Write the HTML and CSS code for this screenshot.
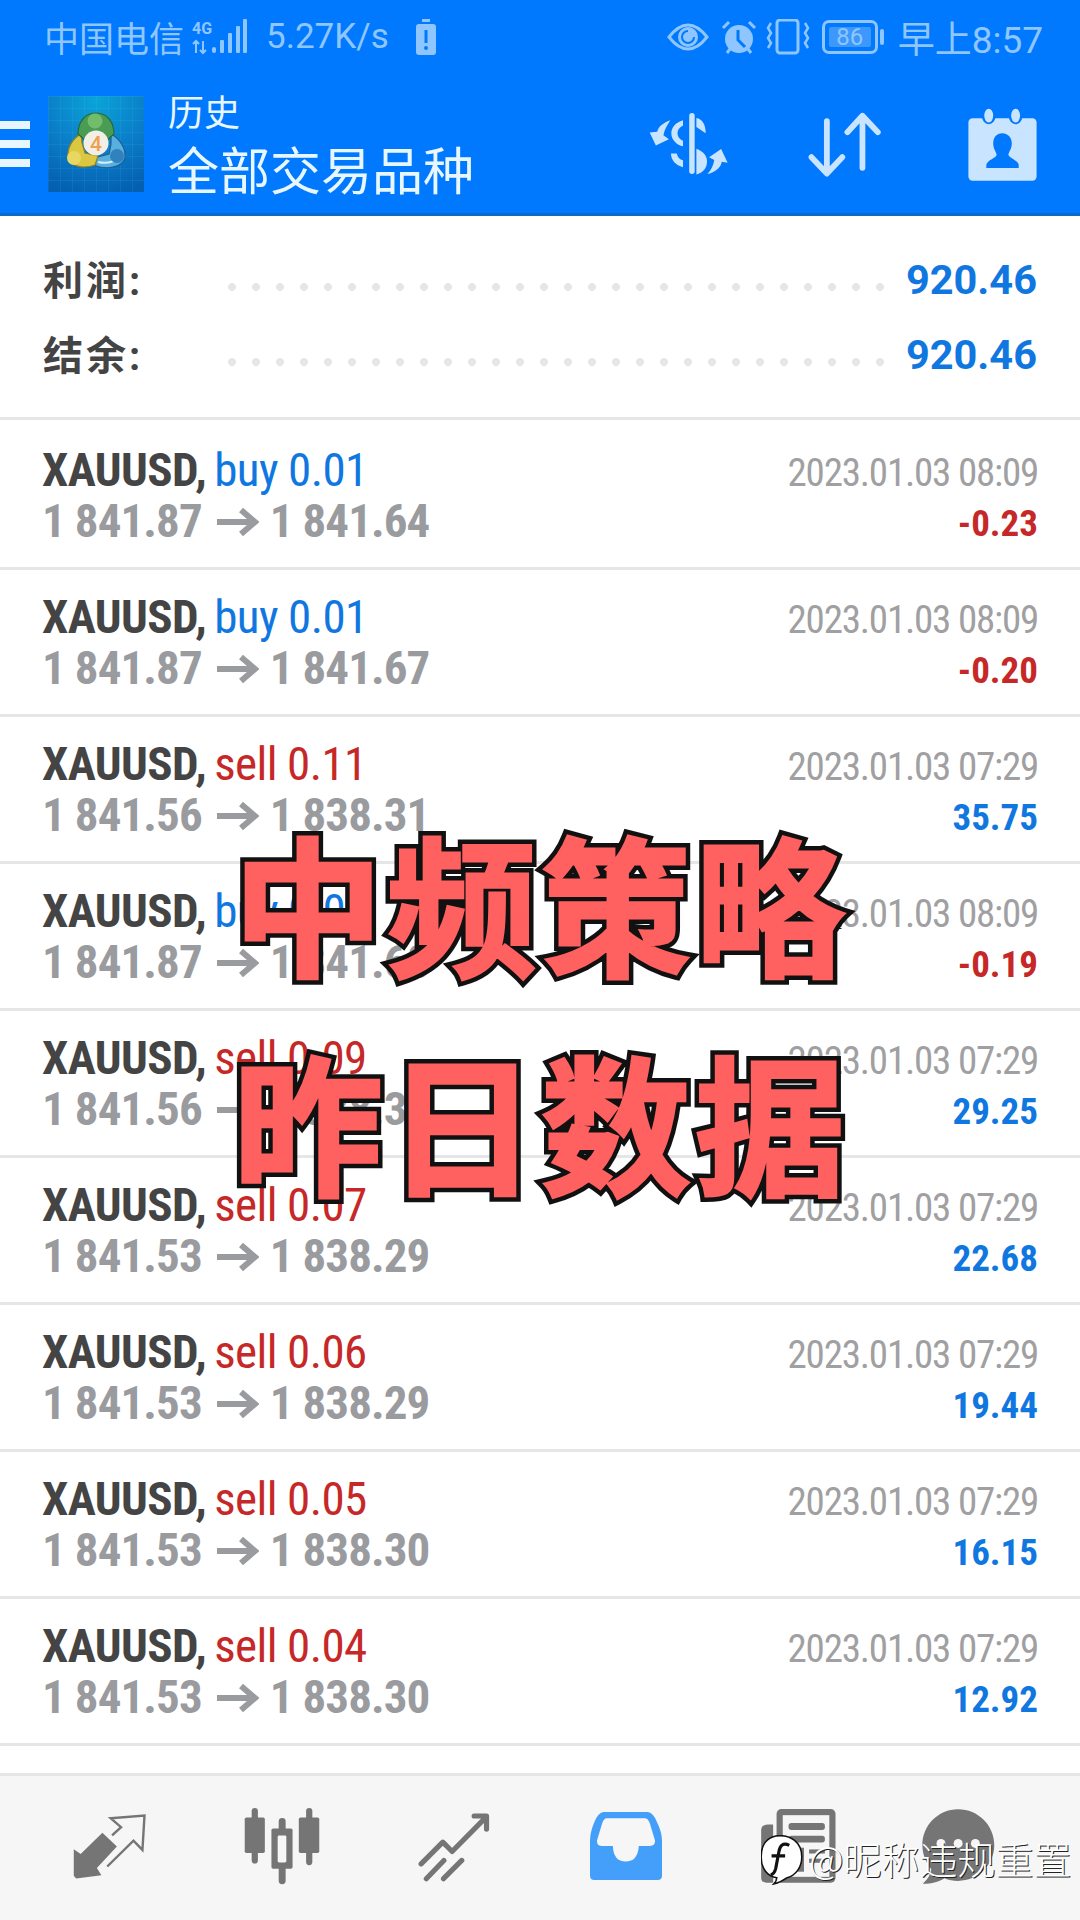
FILE: index.html
```html
<!DOCTYPE html>
<html lang="zh-CN">
<head>
    <meta charset="UTF-8">
    <title>历史</title>
    <link rel="stylesheet" href="styles.css">
</head>
<body>
    <header class="top">
        <div class="status">
            <span class="carrier">中国电信</span>
            <svg class="net" viewBox="0 0 56 36" width="56" height="36">
                <text x="0" y="15" class="net-4g">4G</text>
                <path d="M4 22v12M1 25l3-3 3 3M11 22v12M8 31l3 3 3-3" fill="none" stroke="#8fc6ff" stroke-width="2"/>
                <rect x="20" y="28" width="4" height="6" rx="2" fill="#8fc6ff"/>
                <rect x="28" y="21" width="4" height="13" rx="1" fill="#8fc6ff"/>
                <rect x="36" y="14" width="4" height="20" rx="1" fill="#8fc6ff"/>
                <rect x="44" y="7" width="4" height="27" rx="1" fill="#8fc6ff"/>
                <rect x="51" y="0" width="4" height="34" rx="1" fill="#8fc6ff"/>
            </svg>
            <span class="speed">5.27K/s</span>
            <svg class="bat-low" viewBox="0 0 20 36" width="20" height="36">
                <rect x="6" y="0" width="8" height="3" fill="#8fc6ff"/>
                <rect x="0" y="5" width="20" height="31" rx="3" fill="#8fc6ff"/>
                <rect x="8.5" y="11" width="3" height="13" fill="#0079fe"/>
                <circle cx="10" cy="29" r="2" fill="#0079fe"/>
            </svg>
            <span class="spacer"></span>
            <svg viewBox="0 0 42 28" width="42" height="28">
                <path d="M2 14C9 5 15 2 21 2s12 3 19 12c-7 9-13 12-19 12S9 23 2 14z" fill="none" stroke="#8fc6ff" stroke-width="3"/>
                <circle cx="21" cy="14" r="10" fill="#8fc6ff"/>
                <path d="M21 8a6 6 0 1 0 6 6" fill="none" stroke="#0079fe" stroke-width="2"/>
            </svg>
            <svg class="st-gap" viewBox="0 0 36 36" width="36" height="36">
                <circle cx="18" cy="20" r="14" fill="#8fc6ff"/>
                <path d="M17 11v10l7 7" fill="none" stroke="#0079fe" stroke-width="3"/>
                <path d="M2 9l6-6M34 9l-6-6M6 34l3-4M30 34l-3-4" stroke="#8fc6ff" stroke-width="3" fill="none"/>
            </svg>
            <svg class="st-vib" viewBox="0 0 44 36" width="44" height="36">
                <rect x="11" y="1" width="21" height="33" rx="3" fill="none" stroke="#8fc6ff" stroke-width="3"/>
                <path d="M5 4l-3 5 3 5-3 5 3 5-3 5M39 4l3 5-3 5 3 5-3 5 3 5" fill="none" stroke="#8fc6ff" stroke-width="2.5"/>
            </svg>
            <span class="battery"><span class="battery-num">86</span></span>
            <span class="battery-tip"></span>
            <span class="clock">早上8:57</span>
        </div>
        <div class="toolbar">
            <div class="burger"><i></i><i></i><i></i></div>
            <svg class="logo" viewBox="0 0 96 96" width="96" height="96">
                <defs>
                    <radialGradient id="bg" cx="0.5" cy="0.05" r="1">
                        <stop offset="0" stop-color="#0aa4d8"/>
                        <stop offset="0.55" stop-color="#0a7cc8"/>
                        <stop offset="1" stop-color="#045fb0"/>
                    </radialGradient>
                    <pattern id="grid" width="12" height="12" patternUnits="userSpaceOnUse">
                        <path d="M12 0H0V12" fill="none" stroke="#6cc4ee" stroke-width="0.6" opacity="0.35"/>
                    </pattern>
                </defs>
                <rect width="96" height="96" fill="url(#bg)"/>
                <rect width="96" height="96" fill="url(#grid)"/>
                <path d="M63 38c9 5 15 14 14 24-3 9-17 12-29 8l-2-8 15-4 2-10z" fill="#58b0de" stroke="#1f5f96" stroke-width="1.2"/>
                <path d="M33 38C24 43 19 52 20 62c3 9 16 11 27 7l3-9-13-3-3-10z" fill="#dcc840" stroke="#8f8226" stroke-width="1.2"/>
                <path d="M48 17c11 0 18 9 18 21l-9 8H39l-9-8c0-12 7-21 18-21z" fill="#4a9c54" stroke="#256a3c" stroke-width="1.2"/>
                <path d="M50 66c8 2 16 0 22-5" fill="none" stroke="#d4eefa" stroke-width="2"/>
                <circle cx="47" cy="25" r="7.5" fill="#72bc6c"/>
                <circle cx="26" cy="62" r="7" fill="#e8d862"/>
                <circle cx="69" cy="60" r="7" fill="#2f82bc"/>
                <circle cx="48" cy="47" r="12.5" fill="#f2efe6"/>
                <text x="48" y="55" text-anchor="middle" class="logo-4">4</text>
            </svg>
            <div class="titles">
                <div class="title-sm">历史</div>
                <div class="title-lg">全部交易品种</div>
            </div>
            <span class="spacer"></span>
            <svg class="tool-money" viewBox="320 335 230 185" width="79" height="64">
                <rect x="437" y="337" width="16" height="178" rx="8"/>
                <path d="M458 352c16 3 27 17 27 44l-27-18zM458 516c18-4 31-17 31-38 0-17-12-30-31-37z"/>
                <path d="M419 358c-22 6-34 22-34 38 0 20 16 34 34 38v-16c-10-4-16-12-16-22s6-16 16-22zM384 455c0 20 14 34 35 40v-20c-10-2-16-10-18-20z"/>
                <path d="M382 358c-22 8-36 20-38 34l-22 2 18 38 38-18-16-12c2-14 10-28 20-44zM490 515c26-6 40-22 42-36l17 3-19-40-35 24 15 8c-2 14-8 28-20 41z"/>
            </svg>
            <svg class="tool-arrows" viewBox="780 335 220 190" width="76" height="65">
                <path d="M837 362v150M792 467l45 48 45-48M941 498V348M897 394l44-48 45 48" fill="none" stroke-width="17" stroke-linecap="round" stroke-linejoin="round"/>
            </svg>
            <svg class="tool-cal" viewBox="1243 322 198 212" width="69" height="73">
                <rect x="1243" y="352" width="198" height="181" rx="12"/>
                <ellipse cx="1302" cy="345" rx="20" ry="24" fill="#0079fe"/>
                <ellipse cx="1380" cy="345" rx="20" ry="24" fill="#0079fe"/>
                <ellipse cx="1302" cy="344" rx="13" ry="20"/>
                <ellipse cx="1380" cy="344" rx="13" ry="20"/>
                <path d="M1341 395c-16 0-26 12-26 30 0 14 8 24 10 32 0 10-28 16-30 30v9h94v-9c-2-14-30-20-30-30 2-8 10-18 10-32 0-18-12-30-28-30z" fill="#0079fe"/>
            </svg>
        </div>
    </header>

    <section class="summary">
        <div class="sum-row">
            <span class="sum-label">利润:</span>
            <span class="dots"></span>
            <span class="sum-value">920.46</span>
        </div>
        <div class="sum-row">
            <span class="sum-label">结余:</span>
            <span class="dots"></span>
            <span class="sum-value">920.46</span>
        </div>
    </section>

    <main class="list">
        <div class="deal">
            <div class="deal-left">
                <div class="line-a"><b>XAUUSD,</b> <span class="blue">buy 0.01</span></div>
                <div class="line-b">1 841.87 <svg class="arrow" viewBox="0 0 42 30"><path d="M0 15h38M24 3l14 12-14 12"/></svg> 1 841.64</div>
            </div>
            <div class="deal-right">
                <div class="date">2023.01.03 08:09</div>
                <div class="profit red">-0.23</div>
            </div>
        </div>
        <div class="deal">
            <div class="deal-left">
                <div class="line-a"><b>XAUUSD,</b> <span class="blue">buy 0.01</span></div>
                <div class="line-b">1 841.87 <svg class="arrow" viewBox="0 0 42 30"><path d="M0 15h38M24 3l14 12-14 12"/></svg> 1 841.67</div>
            </div>
            <div class="deal-right">
                <div class="date">2023.01.03 08:09</div>
                <div class="profit red">-0.20</div>
            </div>
        </div>
        <div class="deal">
            <div class="deal-left">
                <div class="line-a"><b>XAUUSD,</b> <span class="red-thin">sell 0.11</span></div>
                <div class="line-b">1 841.56 <svg class="arrow" viewBox="0 0 42 30"><path d="M0 15h38M24 3l14 12-14 12"/></svg> 1 838.31</div>
            </div>
            <div class="deal-right">
                <div class="date">2023.01.03 07:29</div>
                <div class="profit blue">35.75</div>
            </div>
        </div>
        <div class="deal">
            <div class="deal-left">
                <div class="line-a"><b>XAUUSD,</b> <span class="blue">buy 0.01</span></div>
                <div class="line-b">1 841.87 <svg class="arrow" viewBox="0 0 42 30"><path d="M0 15h38M24 3l14 12-14 12"/></svg> 1 841.68</div>
            </div>
            <div class="deal-right">
                <div class="date">2023.01.03 08:09</div>
                <div class="profit red">-0.19</div>
            </div>
        </div>
        <div class="deal">
            <div class="deal-left">
                <div class="line-a"><b>XAUUSD,</b> <span class="red-thin">sell 0.09</span></div>
                <div class="line-b">1 841.56 <svg class="arrow" viewBox="0 0 42 30"><path d="M0 15h38M24 3l14 12-14 12"/></svg> 1 838.31</div>
            </div>
            <div class="deal-right">
                <div class="date">2023.01.03 07:29</div>
                <div class="profit blue">29.25</div>
            </div>
        </div>
        <div class="deal">
            <div class="deal-left">
                <div class="line-a"><b>XAUUSD,</b> <span class="red-thin">sell 0.07</span></div>
                <div class="line-b">1 841.53 <svg class="arrow" viewBox="0 0 42 30"><path d="M0 15h38M24 3l14 12-14 12"/></svg> 1 838.29</div>
            </div>
            <div class="deal-right">
                <div class="date">2023.01.03 07:29</div>
                <div class="profit blue">22.68</div>
            </div>
        </div>
        <div class="deal">
            <div class="deal-left">
                <div class="line-a"><b>XAUUSD,</b> <span class="red-thin">sell 0.06</span></div>
                <div class="line-b">1 841.53 <svg class="arrow" viewBox="0 0 42 30"><path d="M0 15h38M24 3l14 12-14 12"/></svg> 1 838.29</div>
            </div>
            <div class="deal-right">
                <div class="date">2023.01.03 07:29</div>
                <div class="profit blue">19.44</div>
            </div>
        </div>
        <div class="deal">
            <div class="deal-left">
                <div class="line-a"><b>XAUUSD,</b> <span class="red-thin">sell 0.05</span></div>
                <div class="line-b">1 841.53 <svg class="arrow" viewBox="0 0 42 30"><path d="M0 15h38M24 3l14 12-14 12"/></svg> 1 838.30</div>
            </div>
            <div class="deal-right">
                <div class="date">2023.01.03 07:29</div>
                <div class="profit blue">16.15</div>
            </div>
        </div>
        <div class="deal">
            <div class="deal-left">
                <div class="line-a"><b>XAUUSD,</b> <span class="red-thin">sell 0.04</span></div>
                <div class="line-b">1 841.53 <svg class="arrow" viewBox="0 0 42 30"><path d="M0 15h38M24 3l14 12-14 12"/></svg> 1 838.30</div>
            </div>
            <div class="deal-right">
                <div class="date">2023.01.03 07:29</div>
                <div class="profit blue">12.92</div>
            </div>
        </div>
    </main>

    <nav class="tabs">
        <svg viewBox="210 220 220 200" width="76" height="69">
            <path d="M215 328l20 14 63-62 42 40-58 62 13 21-73 10-7-8z" fill="#757575"/>
            <path d="M326 288l26-24-30-26 98-8-6 100-26-27-76 75" fill="none" stroke="#757575" stroke-width="7"/>
        </svg>
        <svg viewBox="705 205 225 225" width="78" height="78">
            <rect x="730" y="208" width="18" height="160" rx="9" fill="#757575"/>
            <rect x="710" y="235" width="58" height="103" rx="5" fill="#757575"/>
            <rect x="887" y="208" width="18" height="165" rx="9" fill="#757575"/>
            <rect x="866" y="235" width="59" height="103" rx="5" fill="#757575"/>
            <rect x="808" y="237" width="20" height="191" rx="10" fill="#757575"/>
            <rect x="787" y="267" width="61" height="116" rx="5" fill="#757575"/>
            <rect x="805" y="287" width="25" height="78" rx="4" fill="#f6f6f6"/>
        </svg>
        <svg viewBox="1210 210 215 205" width="74" height="71">
            <path d="M1222 363l63-63 27 27 98-99M1376 224h36v38M1237 406l51-53M1287 406l53-53" fill="none" stroke="#757575" stroke-width="15" stroke-linecap="round" stroke-linejoin="round"/>
        </svg>
        <svg viewBox="147 217 208 196" width="72" height="68">
            <path fill-rule="evenodd" fill="#449ffb" d="M185 217h130q15 3 25 28 15 30 15 55v100q0 13-13 13H160q-13 0-13-13V300q0-25 13-55 10-25 25-28zM195 235q-8 0-13 15l-15 50q0 15 13 15h33q2 45 37 45t38-45h32q15 0 15-15l-15-50q-5-15-15-15z"/>
        </svg>
        <svg viewBox="645 207 218 216" width="75" height="74">
            <path d="M680 252v170h-20q-15 0-15-15V270q0-18 20-18z" fill="#757575"/>
            <rect x="690" y="207" width="172" height="215" rx="14" fill="#757575"/>
            <rect x="708" y="225" width="136" height="180" fill="#f6f6f6"/>
            <rect x="725" y="248" width="106" height="20" rx="8" fill="#757575"/>
            <rect x="725" y="285" width="106" height="20" rx="8" fill="#757575"/>
            <rect x="725" y="320" width="45" height="70" fill="#757575"/>
            <rect x="785" y="325" width="46" height="12" fill="#757575"/>
            <rect x="785" y="352" width="46" height="12" fill="#757575"/>
        </svg>
        <svg class="tab-chat" viewBox="1108 205 212 218" width="73" height="75">
            <path d="M1213 206c58 0 105 47 105 104s-47 104-105 104c-14 0-28-3-40-8-14 10-36 16-63 16 12-10 22-24 25-42-16-18-26-44-26-70 0-57 46-104 104-104z" fill="#757575"/>
            <circle cx="1163" cy="305" r="13" fill="#f6f6f6"/>
            <circle cx="1213" cy="305" r="13" fill="#f6f6f6"/>
            <circle cx="1263" cy="305" r="13" fill="#f6f6f6"/>
        </svg>
    </nav>

    <div class="stamp">
        <div data-t="中频策略">中频策略</div>
        <div data-t="昨日数据">昨日数据</div>
    </div>

    <div class="mark">
        <svg class="mark-logo" viewBox="0 0 40 48" width="42" height="50">
            <path d="M14 1c14-2 25 6 25 20 0 10-6 18-14 20-4 3-8 5-13 6 2-2 3-4 3-6C6 40 0 32 0 21 0 10 5 3 14 1z" fill="#fff" stroke="#111" stroke-width="1.5"/>
            <path d="M27 10c-6-3-9 0-10 6l-3 16c-1 4-3 6-5 6M10 20h13" fill="none" stroke="#111" stroke-width="3"/>
        </svg>
        <span>@昵称违规重置</span>
    </div>
</body>
</html>
```

FILE: styles.css
```css
* {
    box-sizing: border-box;
}
body {
    margin: 0;
    width: 1080px;
    height: 1920px;
    overflow: hidden;
    position: relative;
    display: flex;
    flex-direction: column;
    background: #fff;
    font-family: Roboto, "Noto Sans CJK SC", sans-serif;
}
.spacer {
    flex: 1;
}

/* blue header */
.top {
    height: 216px;
    background: #0079fe;
    border-bottom: 3px solid #0a6cc8;
    flex-shrink: 0;
}
.status {
    height: 75px;
    padding: 0 37px 2px 44px;
    display: flex;
    align-items: center;
    color: #8fc6ff;
    font-size: 35px;
}
.net {
    margin-left: 8px;
}
.net-4g {
    font-size: 16px;
    font-weight: 700;
    fill: #8fc6ff;
}
.speed {
    margin-left: 18px;
}
.bat-low {
    margin-left: 27px;
}
.st-gap {
    margin-left: 12px;
}
.st-vib {
    margin-left: 9px;
}
.battery {
    width: 56px;
    height: 34px;
    margin-left: 12px;
    padding: 4px;
    border: 3px solid #8fc6ff;
    border-radius: 7px;
    display: flex;
}
.battery-num {
    flex: 1;
    background: #3d98fb;
    border-radius: 2px;
    font-size: 24px;
    line-height: 21px;
    text-align: center;
}
.battery-tip {
    width: 4px;
    height: 16px;
    margin-left: 2px;
    margin-right: 14px;
    background: #8fc6ff;
    border-radius: 2px;
}
.clock {
    font-size: 37px;
}
.toolbar {
    height: 138px;
    padding-right: 43px;
    display: flex;
    align-items: center;
}
.burger {
    width: 30px;
    display: flex;
    flex-direction: column;
    gap: 11px;
}
.burger i {
    height: 8px;
    background: #e8f6ff;
}
.logo {
    margin-left: 18px;
}
.logo-4 {
    font-size: 21px;
    font-weight: 500;
    fill: #eea050;
}
.titles {
    margin-left: 24px;
    padding-top: 6px;
    display: flex;
    flex-direction: column;
    gap: 6px;
    color: #e8f6ff;
}
.title-sm {
    font-size: 36px;
    line-height: 46px;
}
.title-lg {
    font-size: 51px;
    line-height: 60px;
}
.tool-money,
.tool-cal {
    fill: #c8e4ff;
}
.tool-arrows {
    stroke: #c8e4ff;
    margin: 0 85px 0 79px;
}

/* profit and balance */
.summary {
    height: 204px;
    padding: 26px 43px 0;
    border-bottom: 3px solid #e6e6e6;
    flex-shrink: 0;
}
.sum-row {
    height: 75px;
    display: flex;
    align-items: center;
}
.sum-label {
    width: 183px;
    margin-top: -3px;
    font-size: 40px;
    font-weight: 700;
    letter-spacing: 3px;
    color: #444;
}
.dots {
    flex: 1;
    height: 8px;
    margin: 14px 20px 0 2px;
    background: radial-gradient(circle at 4px 4px, #e6e6e6 3.6px, transparent 4.2px) 0 0 / 24px 8px repeat-x;
}
.sum-value {
    font-size: 41.5px;
    font-weight: 700;
    color: #1177e0;
}

/* history rows */
.list {
    flex: 1;
    overflow: hidden;
    min-height: 0;
}
.deal {
    height: 147px;
    padding: 0 42px;
    border-bottom: 3px solid #e6e6e6;
    display: flex;
    justify-content: space-between;
    font-stretch: condensed;
}
.deal:first-child {
    height: 150px;
    padding-top: 3px;
}
.deal-left {
    padding-top: 21px;
}
.line-a {
    font-size: 47px;
    line-height: 52px;
    letter-spacing: -0.6px;
    color: #444;
    white-space: nowrap;
}
.line-a b {
    margin-right: -2px;
}
.line-b {
    font-size: 47px;
    font-weight: 700;
    line-height: 50px;
    letter-spacing: -0.9px;
    color: #9a9b9f;
    white-space: nowrap;
}
.arrow {
    width: 42px;
    height: 30px;
    margin: 0 1px 0 5px;
    fill: none;
    stroke: #9a9b9f;
    stroke-width: 6;
}
.deal-right {
    padding-top: 25px;
    text-align: right;
}
.date {
    font-size: 39px;
    line-height: 50px;
    letter-spacing: -1.2px;
    color: #a0a0a2;
}
.profit {
    font-size: 37px;
    font-weight: 700;
    line-height: 51px;
}
.blue {
    color: #1177e0;
}
.red {
    color: #c62828;
}
.red-thin {
    color: #c62828;
    font-weight: 400;
}

/* bottom tabs */
.tabs {
    height: 147px;
    flex-shrink: 0;
    padding: 0 24px 4px;
    background: #f6f6f6;
    border-top: 3px solid #e6e6e6;
    display: grid;
    grid-template-columns: repeat(6, 172px);
    justify-items: center;
    align-items: center;
}
.tab-chat {
    justify-self: start;
    margin-left: 38px;
}

/* pasted captions over the screenshot */
.stamp {
    position: absolute;
    left: 233px;
    top: 790px;
    isolation: isolate;
    color: #ff6060;
    font-family: "Noto Sans CJK SC", sans-serif;
    font-weight: 700;
    font-size: 150px;
    line-height: 219px;
    letter-spacing: 4px;
    white-space: nowrap;
    -webkit-text-stroke: 3px #ff6060;
}
.stamp div {
    position: relative;
}
.stamp div::before {
    content: attr(data-t);
    position: absolute;
    left: 0;
    top: 0;
    z-index: -1;
    color: #111;
    -webkit-text-stroke: 12px #111;
}
.mark {
    position: absolute;
    left: 761px;
    top: 1829px;
    display: flex;
    align-items: center;
    gap: 6px;
    color: #fff;
    font-family: "Noto Sans CJK SC", sans-serif;
    font-size: 38px;
    font-weight: 300;
    white-space: nowrap;
    text-shadow: 1px 1px 0 #222;
}
.mark-logo {
    margin-top: 6px;
}
```
